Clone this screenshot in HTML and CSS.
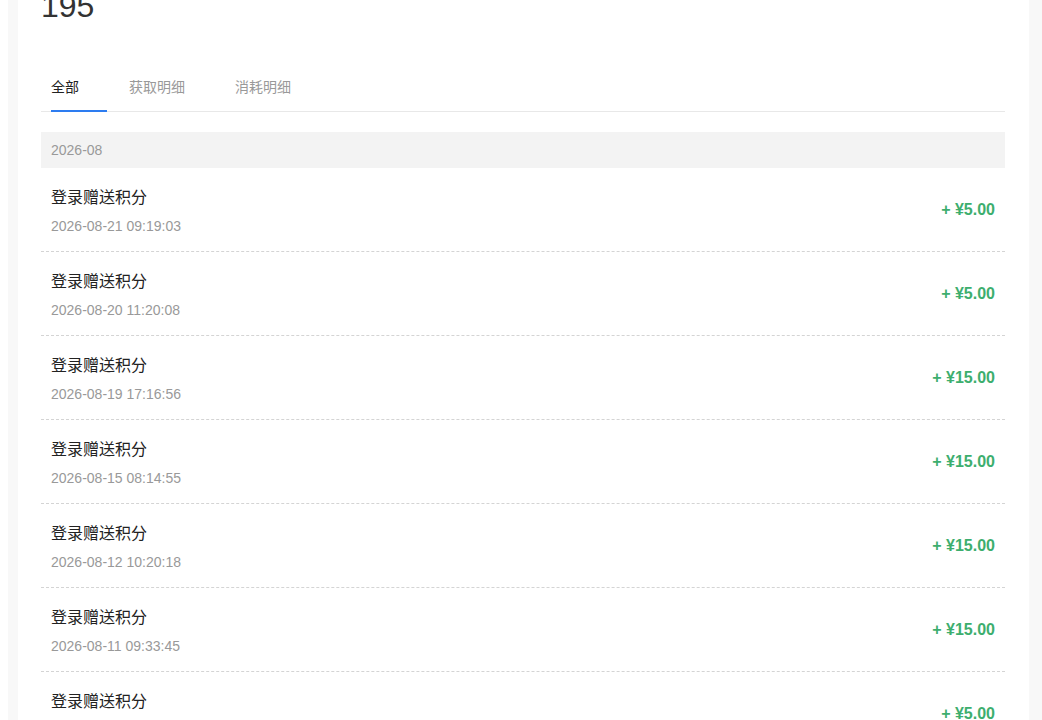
FILE: index.html
```html
<!DOCTYPE html>
<html lang="zh-CN">
<head>
<meta charset="utf-8">
<title>积分明细</title>
<link rel="stylesheet" href="styles.css">
</head>
<body>
  <div class="page">
    <main class="card">
      <div class="balance">195</div>

      <nav class="tabs">
        <a class="tab active">全部</a>
        <a class="tab">获取明细</a>
        <a class="tab">消耗明细</a>
      </nav>

      <section class="month">
        <div class="month-title">2026-08</div>
        <ul class="records">
          <li class="record">
            <div class="info">
              <div class="name">登录赠送积分</div>
              <div class="time">2026-08-21 09:19:03</div>
            </div>
            <div class="amount">+ ¥5.00</div>
          </li>
          <li class="record">
            <div class="info">
              <div class="name">登录赠送积分</div>
              <div class="time">2026-08-20 11:20:08</div>
            </div>
            <div class="amount">+ ¥5.00</div>
          </li>
          <li class="record">
            <div class="info">
              <div class="name">登录赠送积分</div>
              <div class="time">2026-08-19 17:16:56</div>
            </div>
            <div class="amount">+ ¥15.00</div>
          </li>
          <li class="record">
            <div class="info">
              <div class="name">登录赠送积分</div>
              <div class="time">2026-08-15 08:14:55</div>
            </div>
            <div class="amount">+ ¥15.00</div>
          </li>
          <li class="record">
            <div class="info">
              <div class="name">登录赠送积分</div>
              <div class="time">2026-08-12 10:20:18</div>
            </div>
            <div class="amount">+ ¥15.00</div>
          </li>
          <li class="record">
            <div class="info">
              <div class="name">登录赠送积分</div>
              <div class="time">2026-08-11 09:33:45</div>
            </div>
            <div class="amount">+ ¥15.00</div>
          </li>
          <li class="record">
            <div class="info">
              <div class="name">登录赠送积分</div>
              <div class="time">2026-08-10 08:42:17</div>
            </div>
            <div class="amount">+ ¥5.00</div>
          </li>
        </ul>
      </section>
    </main>
  </div>
</body>
</html>
```

FILE: styles.css
```css
html, body {
  height: 100%;
}

body {
  margin: 0;
  padding: 6px 0 0 8px;
  box-sizing: border-box;
  overflow: hidden;
  background: #ffffff;
  font-family: "Liberation Sans", "Noto Sans CJK SC", sans-serif;
  color: #333333;
}

.page {
  background: #f8f8f8;
  padding: 0 13px 0 10px;
  min-height: 100%;
}

.card {
  background: #ffffff;
  padding: 0 24px 40px 23px;
}

.balance {
  font-size: 32px;
  line-height: 1;
  margin-top: -16px;
  color: #333333;
}

.tabs {
  display: flex;
  margin-top: 55px;
  padding-left: 10px;
  border-bottom: 1px solid #e8e8e8;
}

.tab {
  position: relative;
  font-size: 14px;
  line-height: 20px;
  padding-bottom: 14px;
  margin-right: 50px;
  color: #999999;
  cursor: pointer;
}

.tab.active {
  color: #222222;
}

.tab.active::after {
  content: "";
  position: absolute;
  left: 0;
  bottom: -1px;
  width: 56px;
  height: 2px;
  background: #2d7cf0;
}

.month {
  margin-top: 20px;
}

.month-title {
  background: #f3f3f3;
  height: 36px;
  line-height: 36px;
  padding: 0 10px;
  font-size: 14px;
  color: #999999;
}

.records {
  list-style: none;
  margin: 0;
  padding: 0;
}

.record {
  display: flex;
  align-items: center;
  justify-content: space-between;
  padding: 19px 10px 14px;
  border-bottom: 1px dashed #d4d4d4;
}

.name {
  font-size: 16px;
  line-height: 22px;
  color: #222222;
}

.time {
  margin-top: 6px;
  font-size: 14px;
  line-height: 22px;
  color: #999999;
}

.amount {
  margin-bottom: 4px;
  font-size: 16px;
  font-weight: bold;
  color: #3dae6e;
}
```
